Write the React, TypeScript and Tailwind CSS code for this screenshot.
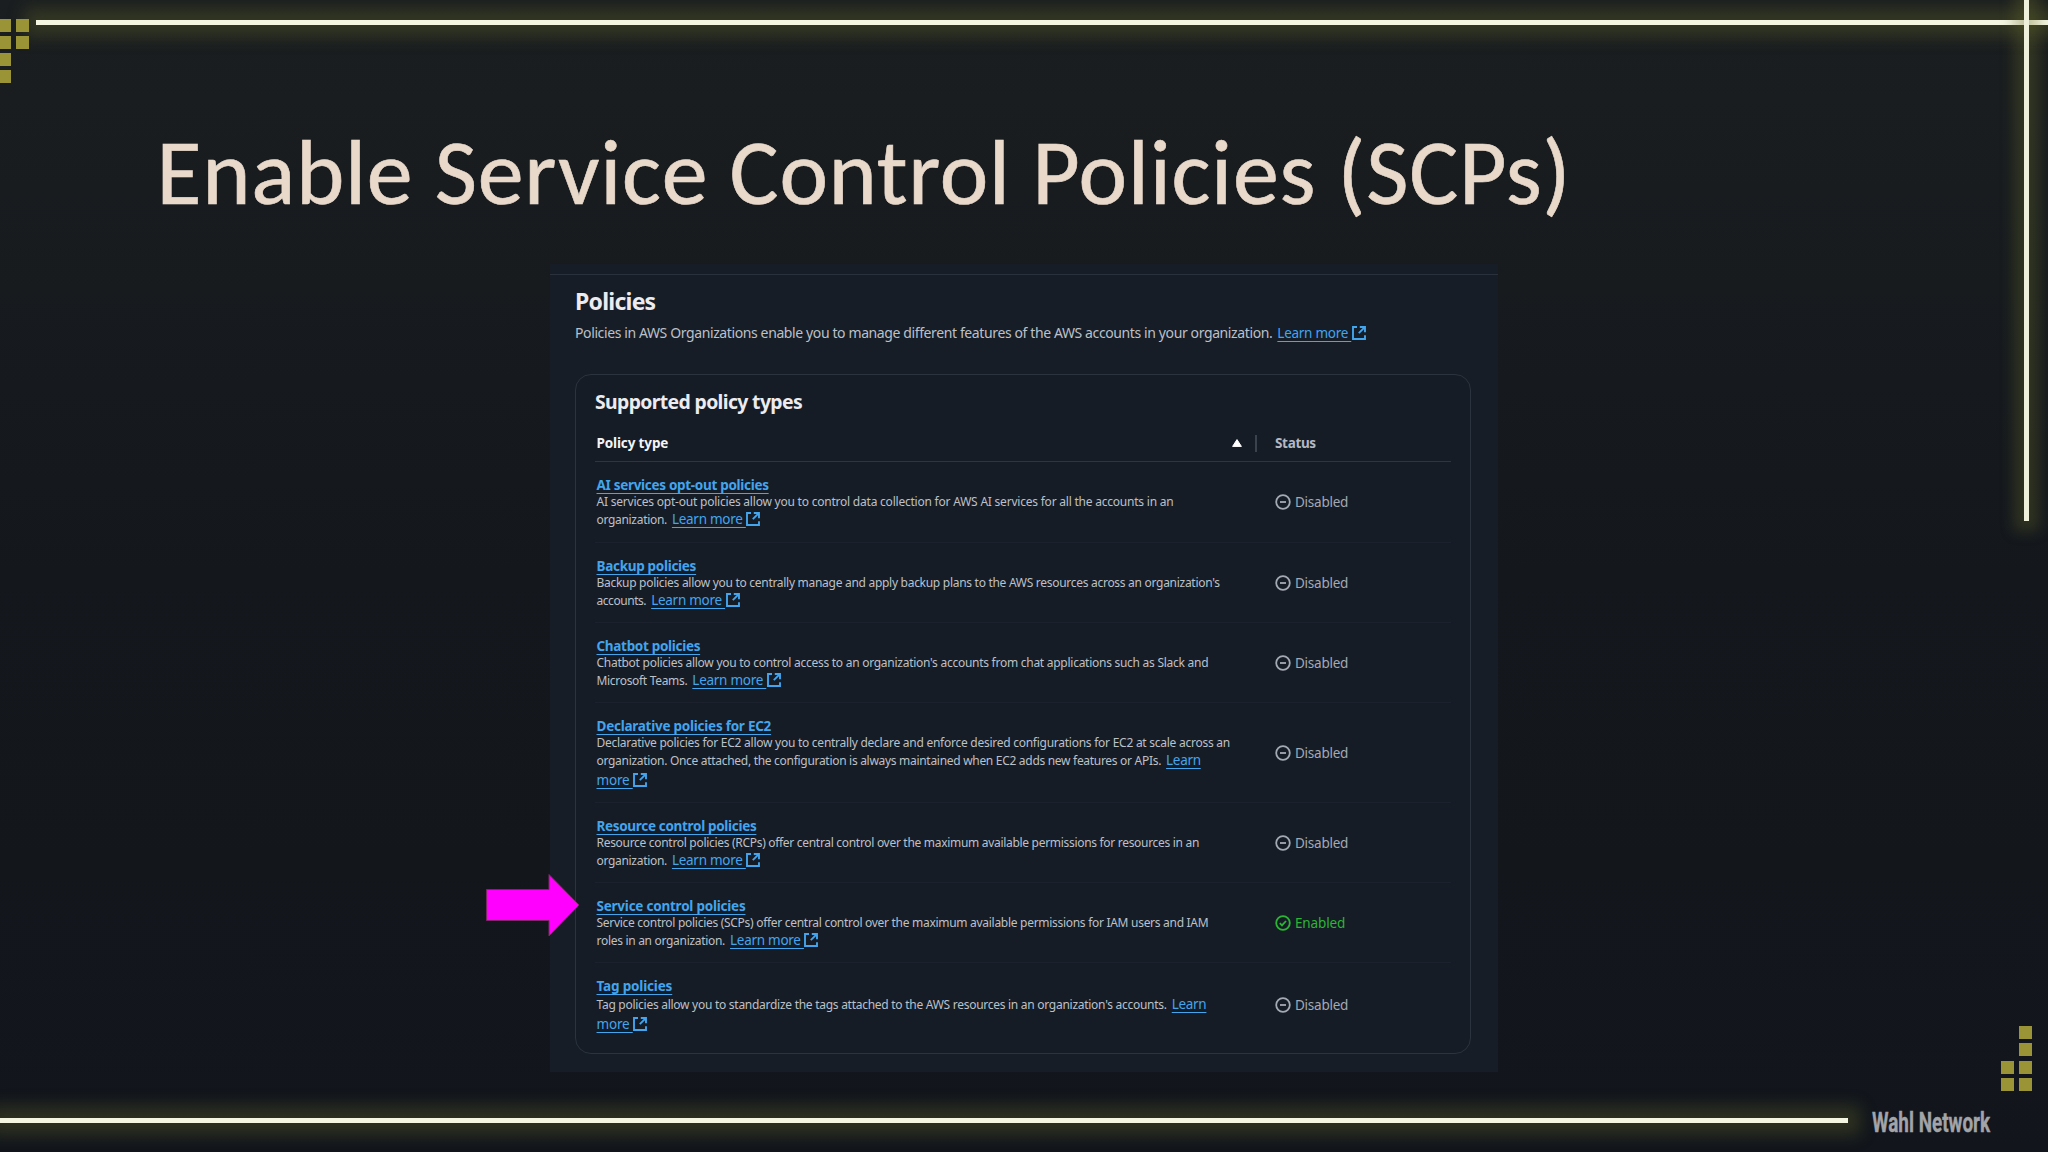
import { useLayoutEffect, useRef } from "react";
import clsx from "clsx";

type DescriptionLine = {
  text?: string;
  width?: number;
  link?: "Learn more" | "Learn" | "more";
};

type Policy = {
  name: string;
  nameWidth: number;
  enabled?: boolean;
  rowClass: string;
  lines: DescriptionLine[];
};

const policies: Policy[] = [
  {
    name: "AI services opt-out policies",
    nameWidth: 172.5,
    rowClass: "h-[81px]",
    lines: [
      { text: "AI services opt-out policies allow you to control data collection for AWS AI services for all the accounts in an", width: 576.5 },
      { text: "organization.", width: 70, link: "Learn more" },
    ],
  },
  {
    name: "Backup policies",
    nameWidth: 99.5,
    rowClass: "h-20",
    lines: [
      { text: "Backup policies allow you to centrally manage and apply backup plans to the AWS resources across an organization's", width: 623.5 },
      { text: "accounts.", width: 50, link: "Learn more" },
    ],
  },
  {
    name: "Chatbot policies",
    nameWidth: 104,
    rowClass: "h-20",
    lines: [
      { text: "Chatbot policies allow you to control access to an organization's accounts from chat applications such as Slack and", width: 611.5 },
      { text: "Microsoft Teams.", width: 91, link: "Learn more" },
    ],
  },
  {
    name: "Declarative policies for EC2",
    nameWidth: 175,
    rowClass: "h-[100px]",
    lines: [
      { text: "Declarative policies for EC2 allow you to centrally declare and enforce desired configurations for EC2 at scale across an", width: 633 },
      { text: "organization. Once attached, the configuration is always maintained when EC2 adds new features or APIs.", width: 564.5, link: "Learn" },
      { link: "more" },
    ],
  },
  {
    name: "Resource control policies",
    nameWidth: 160,
    rowClass: "h-20",
    lines: [
      { text: "Resource control policies (RCPs) offer central control over the maximum available permissions for resources in an", width: 603 },
      { text: "organization.", width: 70, link: "Learn more" },
    ],
  },
  {
    name: "Service control policies",
    nameWidth: 148.5,
    enabled: true,
    rowClass: "h-20",
    lines: [
      { text: "Service control policies (SCPs) offer central control over the maximum available permissions for IAM users and IAM", width: 612 },
      { text: "roles in an organization.", width: 128.5, link: "Learn more" },
    ],
  },
  {
    name: "Tag policies",
    nameWidth: 76,
    rowClass: "h-[84px]",
    lines: [
      { text: "Tag policies allow you to standardize the tags attached to the AWS resources in an organization's accounts.", width: 570, link: "Learn" },
      { link: "more" },
    ],
  },
];

// Tracks the text so that it takes up the given width.
function FitText({ text, width, className }: { text: string; width: number; className?: string }) {
  const ref = useRef<HTMLSpanElement>(null);

  useLayoutEffect(() => {
    const el = ref.current;
    if (!el) return;
    el.style.letterSpacing = "0px";
    el.style.letterSpacing = `${(width - el.offsetWidth) / text.length}px`;
  }, [text, width]);

  return (
    <span ref={ref} className={clsx("whitespace-pre", className)}>
      {text}
    </span>
  );
}

function ExternalIcon() {
  return (
    <svg viewBox="0 0 14 14" className="ml-[0.5px] inline-block h-3.5 w-3.5 align-[-2px]" fill="none" stroke="#42a5ee" strokeWidth="1.9">
      <path d="M5 1H1v12h12V9.2" />
      <path d="M7.8 1H13v5.2M12.6 1.4 6.8 7.2" />
    </svg>
  );
}

const linkWidths = { "Learn more": 74, Learn: 34.5, more: 36 };

function LearnLink({ label }: { label: "Learn more" | "Learn" | "more" }) {
  return (
    <a className="text-[13.5px] text-[#42a5ee]">
      <FitText
        text={label === "Learn" ? label : `${label}\u00a0`}
        width={linkWidths[label]}
        className="underline decoration-1 underline-offset-[3px] [text-decoration-skip-ink:none]"
      />
      {label !== "Learn" && <ExternalIcon />}
    </a>
  );
}

function Status({ enabled }: { enabled?: boolean }) {
  return (
    <div className={clsx("flex items-center gap-1 text-[13.5px] leading-5", enabled ? "text-[#2bb534]" : "text-[#a4a9b3]")}>
      <svg viewBox="0 0 16 16" className="h-4 w-4" fill="none" stroke="currentColor" strokeWidth="1.8">
        <circle cx="8" cy="8" r="6.8" />
        {enabled ? <path d="m4.8 8.2 2.2 2.2 4-4.4" /> : <path d="M5 8h6" />}
      </svg>
      <FitText text={enabled ? "Enabled" : "Disabled"} width={enabled ? 50 : 53} />
    </div>
  );
}

function PolicyRow({ policy, last }: { policy: Policy; last: boolean }) {
  return (
    <div className={clsx("flex", policy.rowClass, !last && "border-b border-[#1b222d]")}>
      <div className="w-[680px] pt-[11.5px] pl-[1.5px]">
        <div className="h-5 leading-5">
          <FitText
            text={policy.name}
            width={policy.nameWidth}
            className="text-[13.5px] font-bold text-[#42a5ee] underline decoration-1 underline-offset-[3px] [text-decoration-skip-ink:none]"
          />
        </div>
        {policy.lines.map((line, index) => (
          <div
            key={index}
            className={clsx("flex items-baseline text-[12px] text-[#bcc0c9]", line.link ? "h-[20.2px] leading-[19.8px]" : "h-[16.5px] leading-[15.6px]")}
          >
            {line.text && line.width && <FitText text={line.text} width={line.width} className={line.link && "mr-[5px]"} />}
            {line.link && <LearnLink label={line.link} />}
          </div>
        ))}
      </div>
      <div className="flex items-center">
        <Status enabled={policy.enabled} />
      </div>
    </div>
  );
}

function Squares({ cells }: { cells: boolean[] }) {
  return (
    <div className="grid grid-cols-[13px_13px] gap-x-[5px] gap-y-[4.3px]">
      {cells.map((on, index) => (
        <span key={index} className={clsx("h-[13px] w-[13px]", on && "bg-[#9a9437]")} />
      ))}
    </div>
  );
}

function Frame() {
  return (
    <>
      <div className="absolute top-5 right-0 left-9 h-[5px] bg-[#f4f6e2] shadow-[0_0_16px_12px_rgba(100,104,40,0.34)]" />
      <div className="absolute top-0 left-[2024px] h-[521px] w-[5px] bg-[#eff0dc] shadow-[0_0_14px_10px_rgba(100,104,40,0.34)]" />
      <div className="absolute top-[1118px] left-0 h-[5px] w-[1848px] bg-[#f4f6e2] shadow-[0_0_16px_12px_rgba(100,104,40,0.34)]" />
      <div className="absolute top-[18.5px] left-[-2px]">
        <Squares cells={[true, true, true, true, true, false, true, false]} />
      </div>
      <div className="absolute top-[1026px] left-[2001px]">
        <Squares cells={[false, true, false, true, true, true, true, true]} />
      </div>
      <div className="absolute top-[1105px] left-[1872px] origin-left scale-x-[0.7] font-['Roboto',sans-serif] text-[27px] leading-9 font-bold text-[#a2a4a8] [-webkit-text-stroke:0.4px_#a2a4a8]">
        <FitText text="Wahl Network" width={169} />
      </div>
      <svg viewBox="0 0 96 66" className="absolute top-[872px] left-[485px] h-[66px] w-24">
        <path d="M1.5 17.5H64V2.5L94 33 64 64V48.5H1.5z" fill="#ff00ff" stroke="#7a2a63" strokeWidth="1" />
      </svg>
    </>
  );
}

export default function App() {
  return (
    <main className="relative h-[1152px] w-[2048px] overflow-hidden bg-linear-to-b from-[#1a1e20] via-[#14181d] to-[#12161c] font-['Noto_Sans','Open_Sans',sans-serif]">
      <h1 className="h-[264px] pt-[123px] pl-[156.5px] font-['Carlito','Calibri','Lato',sans-serif] text-[92px] leading-[100px] text-[#e9d9cb] [-webkit-text-stroke:0.6px_#e9d9cb]">
        <FitText text="Enable Service Control Policies (SCPs)" width={1415} />
      </h1>

      <section className="ml-[550px] h-[808px] w-[948px] bg-[#161d27] pt-2.5">
        <div className="border-t border-[#29313d] px-[25px] pt-2.5">
          <h2 className="h-8 text-[23px] leading-8 font-bold text-[#ebebf0]">
            <FitText text="Policies" width={80} />
          </h2>
          <p className="mt-1.5 flex h-5 items-baseline text-sm leading-5 text-[#bcc0c9]">
            <FitText
              text="Policies in AWS Organizations enable you to manage different features of the AWS accounts in your organization."
              width={697}
              className="mr-[5px]"
            />
            <LearnLink label="Learn more" />
          </p>

          <div className="mt-[31px] h-[680px] w-[896px] rounded-2xl border border-[#2b333e] bg-[#161c26] pt-[14px] pr-[19px] pl-[19px]">
            <h3 className="h-[25px] text-[19.4px] leading-[25px] font-bold text-[#ebebf0]">
              <FitText text="Supported policy types" width={207} />
            </h3>
            <div className="flex h-12 border-b border-[#2d3541] pt-[19px] text-[13.5px] leading-5 font-bold">
              <div className="flex h-5 w-[660px] items-center justify-between pr-[13px] pl-[1.5px] text-[#f4f4f6]">
                <FitText text="Policy type" width={71.5} />
                <svg viewBox="0 0 10 8" className="h-2 w-2.5">
                  <path d="M5 .6 9.4 7.4H.6z" fill="#fff" stroke="#fff" strokeWidth="1" strokeLinejoin="round" />
                </svg>
              </div>
              <div className="mt-0.5 h-[17px] w-0.5 bg-[#3a424e]" />
              <div className="pl-[18px] text-[#b4b8c1]">
                <FitText text="Status" width={41} />
              </div>
            </div>
            {policies.map((policy, index) => (
              <PolicyRow key={policy.name} policy={policy} last={index === policies.length - 1} />
            ))}
          </div>
        </div>
      </section>

      <Frame />
    </main>
  );
}
